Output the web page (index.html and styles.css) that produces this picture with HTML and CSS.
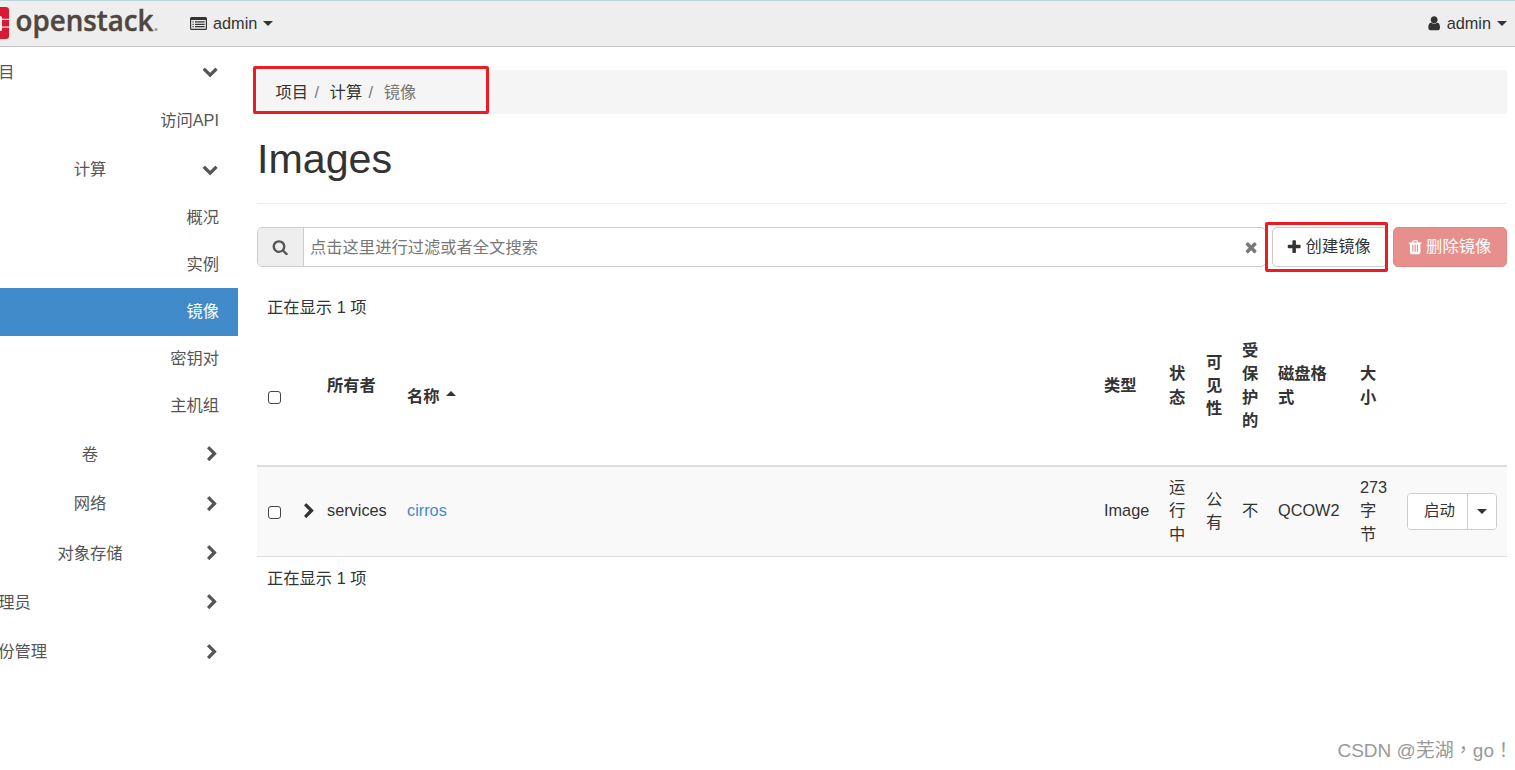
FILE: index.html
```
<!DOCTYPE html>
<html lang="zh-CN">
<head>
  <meta charset="UTF-8" />
  <title>Images - OpenStack Dashboard</title>
  <link rel="stylesheet" href="styles.css">
</head>
<body>

<svg class="sprite" xmlns="http://www.w3.org/2000/svg">
  <symbol id="chevron-down" viewBox="0 0 1792 1792"><path d="M1683 808l-742 741q-19 19-45 19t-45-19l-742-741q-19-19-19-45.500t19-45.500l166-165q19-19 45-19t45 19l531 531 531-531q19-19 45-19t45 19l166 165q19 19 19 45.500t-19 45.500z"/></symbol>
  <symbol id="chevron-right" viewBox="0 0 1792 1792"><path d="M1363 877l-742 742q-19 19-45 19t-45-19l-166-166q-19-19-19-45t19-45l531-531-531-531q-19-19-19-45t19-45l166-166q19-19 45-19t45 19l742 742q19 19 19 45t-19 45z"/></symbol>
  <symbol id="search" viewBox="0 0 1792 1792"><path d="M1216 832q0-185-131.500-316.500t-316.500-131.500-316.500 131.500-131.500 316.500 131.500 316.500 316.500 131.500 316.500-131.500 131.500-316.500zm512 832q0 52-38 90t-90 38q-54 0-90-38l-343-342q-179 124-399 124-143 0-273.500-55.500t-225-150-150-225-55.500-273.500 55.500-273.500 150-225 225-150 273.500-55.500 273.500 55.500 225 150 150 225 55.500 273.500q0 220-124 399l343 343q37 37 37 90z"/></symbol>
  <symbol id="times" viewBox="0 0 1792 1792"><path d="M1490 1322q0 40-28 68l-136 136q-28 28-68 28t-68-28l-294-294-294 294q-28 28-68 28t-68-28l-136-136q-28-28-28-68t28-68l294-294-294-294q-28-28-28-68t28-68l136-136q28-28 68-28t68 28l294 294 294-294q28-28 68-28t68 28l136 136q28 28 28 68t-28 68l-294 294 294 294q28 28 28 68z"/></symbol>
  <symbol id="plus" viewBox="0 0 1792 1792"><path d="M1600 736v192q0 40-28 68t-68 28h-416v416q0 40-28 68t-68 28h-192q-40 0-68-28t-28-68v-416h-416q-40 0-68-28t-28-68v-192q0-40 28-68t68-28h416v-416q0-40 28-68t68-28h192q40 0 68 28t28 68v416h416q40 0 68 28t28 68z"/></symbol>
  <symbol id="user" viewBox="0 0 1792 1792"><path d="M1536 1399q0 109-62.500 187t-150.500 78h-854q-88 0-150.500-78t-62.500-187q0-85 8.500-160.500t31.500-152 58.500-131 94-89 134.500-34.500q131 128 313 128t313-128q76 0 134.500 34.500t94 89 58.500 131 31.500 152 8.500 160.500zm-256-887q0 159-112.500 271.500t-271.500 112.500-271.500-112.500-112.500-271.500 112.500-271.500 271.500-112.500 271.500 112.500 112.500 271.500z"/></symbol>
  <symbol id="trash" viewBox="0 0 1792 1792"><path d="M704 1376v-704q0-14-9-23t-23-9h-64q-14 0-23 9t-9 23v704q0 14 9 23t23 9h64q14 0 23-9t9-23zm256 0v-704q0-14-9-23t-23-9h-64q-14 0-23 9t-9 23v704q0 14 9 23t23 9h64q14 0 23-9t9-23zm256 0v-704q0-14-9-23t-23-9h-64q-14 0-23 9t-9 23v704q0 14 9 23t23 9h64q14 0 23-9t9-23zm-544-992h448l-48-117q-7-9-17-11h-317q-10 2-17 11zm928 32v64q0 14-9 23t-23 9h-96v948q0 83-47 143.500t-113 60.500h-832q-66 0-113-58.500t-47-141.500v-952h-96q-14 0-23-9t-9-23v-64q0-14 9-23t23-9h309l70-167q15-37 54-63t79-26h320q40 0 79 26t54 63l70 167h309q14 0 23 9t9 23z"/></symbol>
  <symbol id="list-alt" viewBox="0 0 17 13"><path fill-rule="evenodd" d="M1.500 0h14q1.500 0 1.500 1.500v10q0 1.500-1.500 1.500h-14q-1.500 0-1.500-1.500v-10q0-1.500 1.500-1.500zM1.200 3v8.300q0 .5.500.5h13.600q.5 0 .5-.5v-8.300zM2.500 4.300h1.200v1.200h-1.200zM5 4.300h9.600v1.200h-9.600zM2.500 6.700h1.200v1.200h-1.200zM5 6.700h9.600v1.200h-9.600zM2.500 9.100h1.200v1.200h-1.200zM5 9.100h9.600v1.200h-9.600z"/></symbol>
</svg>

<header class="navbar">
  <svg class="logo" width="160" height="40" viewBox="0 0 160 40">
    <path class="logo-mark" d="M0 3h6q3 0 3 3v8.700h-7v-1.200q0-1.500-1.500-1.500h-.5zM2 16h7v6.500h-7zM0 27h.5q1.500 0 1.500-1.500v-1.700h7v8.200q0 3-3 3h-6z"/>
    <text class="logo-text" x="15.500" y="27" textLength="138" lengthAdjust="spacingAndGlyphs">openstack</text>
    <circle class="logo-dot" cx="156" cy="25.500" r="1.500"/>
  </svg>
  <a class="nav-link project"><svg class="icon-list"><use href="#list-alt"/></svg>admin<span class="caret"></span></a>
  <a class="nav-link account"><svg class="icon"><use href="#user"/></svg>admin<span class="caret"></span></a>
</header>

<div class="page">
  <nav class="sidebar">
    <div class="nav-group first"><span>项目</span><svg class="icon"><use href="#chevron-down"/></svg></div>
    <a class="nav-item api">访问API</a>
    <div class="nav-panel open"><span>计算</span><svg class="icon"><use href="#chevron-down"/></svg></div>
    <a class="nav-item">概况</a>
    <a class="nav-item">实例</a>
    <a class="nav-item active">镜像</a>
    <a class="nav-item">密钥对</a>
    <a class="nav-item">主机组</a>
    <div class="nav-panel"><span>卷</span><svg class="icon right"><use href="#chevron-right"/></svg></div>
    <div class="nav-panel"><span>网络</span><svg class="icon right"><use href="#chevron-right"/></svg></div>
    <div class="nav-panel"><span>对象存储</span><svg class="icon right"><use href="#chevron-right"/></svg></div>
    <div class="nav-group">管理员<svg class="icon right"><use href="#chevron-right"/></svg></div>
    <div class="nav-group">身份管理<svg class="icon right"><use href="#chevron-right"/></svg></div>
  </nav>

  <main class="content">
    <ol class="breadcrumb">
      <li>项目</li>
      <li>计算</li>
      <li class="current">镜像</li>
    </ol>
    <h1>Images</h1>

    <div class="toolbar">
      <div class="search-bar">
        <span class="addon"><svg class="icon"><use href="#search"/></svg></span>
        <span class="search-input">点击这里进行过滤或者全文搜索</span>
        <svg class="icon clear"><use href="#times"/></svg>
      </div>
      <button class="btn create"><svg class="icon"><use href="#plus"/></svg>创建镜像</button>
      <button class="btn danger"><svg class="icon"><use href="#trash"/></svg>删除镜像</button>
    </div>

    <div class="table-info">正在显示 1 项</div>
    <table class="images-table">
      <colgroup>
        <col class="c-check"><col class="c-toggle"><col class="c-owner"><col class="c-name"><col class="c-type"><col class="c-status">
        <col class="c-narrow"><col class="c-narrow"><col class="c-format"><col class="c-size"><col class="c-actions">
      </colgroup>
      <thead>
        <tr>
          <th class="check"><span class="checkbox"></span></th>
          <th></th>
          <th>所有者</th>
          <th class="sorted">名称<span class="caret up"></span></th>
          <th>类型</th>
          <th>状态</th>
          <th>可见性</th>
          <th>受保护的</th>
          <th>磁盘格式</th>
          <th>大小</th>
          <th></th>
        </tr>
      </thead>
      <tbody>
        <tr>
          <td class="check"><span class="checkbox"></span></td>
          <td class="toggle"><svg class="icon"><use href="#chevron-right"/></svg></td>
          <td>services</td>
          <td><a class="link">cirros</a></td>
          <td>Image</td>
          <td>运行中</td>
          <td>公有</td>
          <td>不</td>
          <td>QCOW2</td>
          <td>273 字节</td>
          <td><div class="btn-group"><button>启动</button><button class="drop"><span class="caret"></span></button></div></td>
        </tr>
      </tbody>
    </table>
    <div class="table-info bottom">正在显示 1 项</div>
  </main>
</div>

<div class="mark mark-breadcrumb"></div>
<div class="mark mark-create"></div>
<div class="watermark" lang="zh-TW">CSDN @芜湖，go！</div>

</body>
</html>
```
FILE: styles.css
```
* { box-sizing: border-box; }
body {
  margin: 0; height: 770px; overflow: hidden; position: relative; background: #fff; color: #333;
  font-family: "Liberation Sans", "Noto Sans CJK SC", sans-serif; font-size: 16.3px; line-height: 23.3px;
}
button { font: inherit; color: inherit; margin: 0; padding: 0; background: #fff; }
.sprite { display: none; }
.icon { width: 16.33px; height: 16.33px; fill: currentColor; flex: none; }
.caret {
  display: inline-block; border-top: 5px solid currentColor;
  border-left: 5px solid transparent; border-right: 5px solid transparent;
}
.caret.up { border-top: 0; border-bottom: 5px solid currentColor; margin-left: 6px; vertical-align: 6px; }

.navbar {
  display: flex; align-items: center; height: 47px; background: #eee;
  border-top: 1px solid #b9d5da; border-bottom: 1px solid #c4c4c4; padding-right: 8px;
}
.logo { margin-top: 1px; flex: none; overflow: visible; }
.logo-mark { fill: #da1a32; }
.logo-text { font-family: "Open Sans", sans-serif; font-size: 28.5px; font-weight: 600; fill: #4f463e; stroke: #4f463e; stroke-width: .4px; }
.logo-dot { fill: #9b9691; }
.nav-link { display: flex; align-items: center; }
.nav-link .caret { margin-left: 6px; }
.project { margin-left: 30px; }
.icon-list { width: 17px; height: 13px; margin-right: 6px; fill: #333; }
.account { margin-left: auto; }
.account .icon { margin-right: 4px; }

.page { display: flex; }
.sidebar { width: 238px; flex: none; color: #555; }
.nav-group, .nav-panel { display: flex; align-items: center; height: 49.3px; padding-right: 20px; }
.nav-group { justify-content: space-between; margin-left: -18px; }
.nav-group.first span { padding-top: 1.5px; }
.nav-panel span { width: 180px; text-align: center; }
.nav-panel .icon { margin-left: auto; }
.icon.right { margin-right: -2px; }
.nav-item { display: flex; align-items: center; justify-content: flex-end; height: 47px; padding-right: 19px; }
.nav-item.api { height: 48px; padding-top: 1px; }
.nav-panel.open { height: 49.7px; padding-top: 1px; }
.nav-panel.open span { padding-top: 1px; }
.nav-item.active { height: 48px; padding-bottom: 1px; background: #428bca; color: #fff; }
.nav-item.active ~ .nav-item { padding-bottom: 1.5px; }

.content { width: 1250px; margin-left: 19px; padding-top: 23px; }
.breadcrumb {
  display: flex; align-items: center; height: 44px; margin: 0; padding: 2px 19px 0 18.5px;
  list-style: none; background: #f5f5f5; border-radius: 4px;
}
.breadcrumb li + li::before { content: "/"; color: #777; padding: 0 10.7px 0 6.3px; }
.breadcrumb .current { color: #777; }
h1 {
  height: 90px; margin: 0 0 23px; padding-top: 21px; border-bottom: 1px solid #eee;
  font-size: 41.2px; font-weight: 400; line-height: 48px;
}

.toolbar { display: flex; height: 40px; }
.search-bar {
  display: flex; align-items: center; width: 1009px; margin-right: 6px; padding-right: 6px;
  border: 1px solid #ccc; border-radius: 5px; color: #777;
}
.addon {
  display: flex; align-items: center; justify-content: center; width: 46px; height: 100%; color: #555;
  background: #eee; border-right: 1px solid #ccc; border-radius: 4px 0 0 4px;
}
.search-input { flex: 1; padding: 2px 0 0 6px; }
.btn {
  display: flex; align-items: center; justify-content: center; height: 40px;
  border: 1px solid #ccc; border-radius: 5px;
}
.btn .icon { margin-right: 3px; }
.create { width: 115px; margin-right: 6px; padding-right: 2px; }
.danger { width: 114px; padding-right: 2px; background: #e78f8d; border-color: #e38583; color: #fff; }

.table-info { padding: 29px 10px 0; height: 61px; }
.table-info.bottom { padding-top: 10px; }
.images-table { width: 1250px; table-layout: fixed; border-collapse: separate; border-spacing: 0; }
.c-check { width: 36px; }
.c-toggle { width: 24px; }
.c-owner { width: 80px; }
.c-name { width: 697px; }
.c-type { width: 65px; }
.c-status { width: 37px; }
.c-narrow { width: 36px; }
.c-format { width: 82px; }
.c-size { width: 47px; }
.c-actions { width: 110px; }
th, td { padding: 9px 9px 10px 10px; text-align: left; vertical-align: middle; }
th { height: 139px; padding-bottom: 31px; border-bottom: 2px solid #ddd; }
th.sorted { padding-top: 31px; }
th.check { padding-top: 33px; }
td { height: 90px; background: #f9f9f9; border-bottom: 1px solid #ddd; }
td.toggle { padding: 0; }
td.toggle .icon { display: block; margin-left: 7.5px; }
td.check { padding-top: 11px; }
.checkbox { display: block; width: 13px; height: 13px; margin-left: 1px; background: #fff; border: 1px solid #444; border-radius: 3px; }
.link { color: #428bca; }
.btn-group { display: flex; height: 37px; width: 90px; border: 1px solid #ccc; border-radius: 4px; overflow: hidden; }
.btn-group button { flex: 1; border: 0; font-size: 15.5px; padding-left: 4px; }
.btn-group .drop { display: flex; align-items: center; justify-content: center; flex: none; width: 29px; padding: 0; border-left: 1px solid #ccc; }

/* red highlight frames over the page */
.mark { position: absolute; border: 3px solid #ed1c24; border-radius: 2px; }
.mark-breadcrumb { left: 253px; top: 66px; width: 236px; height: 48px; }
.mark-create { left: 1265px; top: 222px; width: 123px; height: 50px; }
.watermark {
  position: absolute; right: 2px; bottom: 8px; font-family: "Liberation Sans", "Noto Sans CJK TC", sans-serif;
  font-size: 19px; color: #999; white-space: nowrap;
}
```
